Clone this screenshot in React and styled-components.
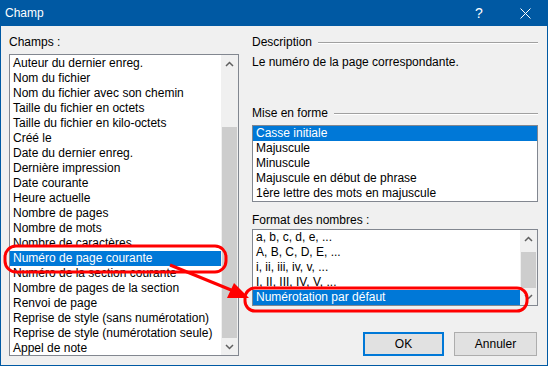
import React from "react";
import styled, { createGlobalStyle } from "styled-components";

const GlobalStyle = createGlobalStyle`
  html, body {
    margin: 0;
    padding: 0;
    background: #f0f0f0;
  }
  body {
    font-family: "Liberation Sans", Arial, sans-serif;
    font-size: 12px;
    color: #000;
  }
`;

const Window = styled.div`
  position: relative;
  width: 548px;
  height: 366px;
  display: flex;
  flex-direction: column;
  background: #f0f0f0;
`;

const TitleBar = styled.div`
  height: 26px;
  flex: none;
  display: flex;
  align-items: center;
  background: #0059a3;
  color: #fff;
`;

const Title = styled.div`
  flex: 1;
  padding-left: 5px;
  font-size: 12px;
`;

const CaptionButton = styled.div`
  width: 46px;
  height: 26px;
  display: flex;
  align-items: center;
  justify-content: center;
  font-size: 14px;
`;

const Body = styled.div`
  flex: 1;
  display: flex;
  gap: 13px;
  padding: 9px 8px 0 8px;
  border: 1px solid #0059a3;
  border-top: none;
`;

const LeftColumn = styled.div`
  width: 230px;
  display: flex;
  flex-direction: column;
`;

const RightColumn = styled.div`
  width: 287px;
  display: flex;
  flex-direction: column;
`;

const Label = styled.div`
  height: 15px;
  line-height: 15px;
  margin-top: ${(p) => p.$mt || 0}px;
  margin-bottom: ${(p) => p.$mb || 0}px;
  white-space: nowrap;
`;

const GroupHeader = styled.div`
  display: flex;
  align-items: center;
  gap: 6px;
  height: 15px;
  line-height: 15px;
  margin-top: ${(p) => p.$mt || 0}px;
  margin-right: 1px;

  &::after {
    content: "";
    flex: 1;
    border-top: 1px solid #a0a0a0;
    border-bottom: 1px solid #fff;
  }
`;

const ListBox = styled.div`
  display: flex;
  height: ${(p) => p.$h}px;
  margin-top: ${(p) => p.$mt || 0}px;
  margin-right: ${(p) => p.$mr || 0}px;
  box-sizing: border-box;
  border: 1px solid #828790;
  background: #fff;
`;

const Items = styled.div`
  flex: 1;
  overflow: hidden;
  padding-top: ${(p) => p.$pt || 0}px;
`;

const Item = styled.div`
  height: 15px;
  line-height: 15px;
  padding-left: 3px;
  white-space: nowrap;
  background: ${(p) => (p.$selected ? "#0078d7" : "transparent")};
  color: ${(p) => (p.$selected ? "#fff" : "#000")};
`;

const ScrollBar = styled.div`
  width: 17px;
  flex: none;
  display: flex;
  flex-direction: column;
  background: #f0f0f0;
`;

const ArrowButton = styled.div`
  height: 17px;
  flex: none;
  display: flex;
  align-items: center;
  justify-content: center;
`;

const Track = styled.div`
  flex: 1;
  display: flex;
  flex-direction: column;
  padding-top: ${(p) => p.$offset}px;
`;

const Thumb = styled.div`
  flex: 1;
  margin: 0 1px;
  background: #cdcdcd;
`;

const Description = styled.div`
  height: 15px;
  line-height: 15px;
  margin-top: 5px;
`;

const ButtonRow = styled.div`
  display: flex;
  justify-content: flex-end;
  gap: 10px;
  margin-top: 26px;
  padding-right: 2px;
`;

const Button = styled.div`
  width: ${(p) => p.$w}px;
  height: 24px;
  box-sizing: border-box;
  display: flex;
  align-items: center;
  justify-content: center;
  background: #e1e1e1;
  border: ${(p) => (p.$default ? "2px solid #0078d7" : "1px solid #adadad")};
`;

const Overlay = styled.svg`
  position: absolute;
  left: 0;
  top: 0;
  pointer-events: none;
`;

const Chevron = ({ up }) => (
  <svg width="9" height="6" viewBox="0 0 9 6">
    <polyline
      points={up ? "1,5 4.5,1.5 8,5" : "1,1 4.5,4.5 8,1"}
      fill="none"
      stroke="#606060"
      strokeWidth="1.5"
    />
  </svg>
);

const Scroll = ({ offset }) => (
  <ScrollBar>
    <ArrowButton>
      <Chevron up />
    </ArrowButton>
    <Track $offset={offset}>
      <Thumb />
    </Track>
    <ArrowButton>
      <Chevron />
    </ArrowButton>
  </ScrollBar>
);

const champs = [
  "Auteur du dernier enreg.",
  "Nom du fichier",
  "Nom du fichier avec son chemin",
  "Taille du fichier en octets",
  "Taille du fichier en kilo-octets",
  "Créé le",
  "Date du dernier enreg.",
  "Dernière impression",
  "Date courante",
  "Heure actuelle",
  "Nombre de pages",
  "Nombre de mots",
  "Nombre de caractères",
  "Numéro de page courante",
  "Numéro de la section courante",
  "Nombre de pages de la section",
  "Renvoi de page",
  "Reprise de style (sans numérotation)",
  "Reprise de style (numérotation seule)",
  "Appel de note",
];

const formes = [
  "Casse initiale",
  "Majuscule",
  "Minuscule",
  "Majuscule en début de phrase",
  "1ère lettre des mots en majuscule",
];

const formats = [
  "a, b, c, d, e, ...",
  "A, B, C, D, E, ...",
  "i, ii, iii, iv, v, ...",
  "I, II, III, IV, V, ...",
  "Numérotation par défaut",
];

export default function App() {
  return (
    <>
      <GlobalStyle />
      <Window>
        <TitleBar>
          <Title>Champ</Title>
          <CaptionButton>?</CaptionButton>
          <CaptionButton>
            <svg width="11" height="11" viewBox="0 0 11 11">
              <path d="M0.5 0.5 L10.5 10.5 M10.5 0.5 L0.5 10.5" stroke="#fff" strokeWidth="1" />
            </svg>
          </CaptionButton>
        </TitleBar>
        <Body>
          <LeftColumn>
            <Label $mb={4}>Champs :</Label>
            <ListBox $h={302}>
              <Items $pt={1}>
                {champs.map((c) => (
                  <Item key={c} $selected={c === "Numéro de page courante"}>
                    {c}
                  </Item>
                ))}
              </Items>
              <Scroll offset={55} />
            </ListBox>
          </LeftColumn>
          <RightColumn>
            <GroupHeader>Description</GroupHeader>
            <Description>Le numéro de la page correspondante.</Description>
            <GroupHeader $mt={36}>Mise en forme</GroupHeader>
            <ListBox $h={77} $mt={4} $mr={1}>
              <Items>
                {formes.map((f, i) => (
                  <Item key={f} $selected={i === 0}>
                    {f}
                  </Item>
                ))}
              </Items>
            </ListBox>
            <Label $mt={11}>Format des nombres :</Label>
            <ListBox $h={77} $mt={1} $mr={1}>
              <Items>
                {formats.map((f, i) => (
                  <Item key={f} $selected={i === 4}>
                    {f}
                  </Item>
                ))}
              </Items>
              <Scroll offset={5} />
            </ListBox>
            <ButtonRow>
              <Button $w={81} $default>
                OK
              </Button>
              <Button $w={83}>Annuler</Button>
            </ButtonRow>
          </RightColumn>
        </Body>
        <Overlay width="548" height="366">
          <rect x="5" y="246" width="221" height="26" rx="11" fill="none" stroke="#f00" strokeWidth="3" />
          <rect x="245" y="288" width="282" height="23" rx="10" fill="none" stroke="#f00" strokeWidth="3" />
          <line x1="170" y1="265" x2="236" y2="292" stroke="#f00" strokeWidth="3" />
          <polygon points="249,298 227,298 234,283" fill="#f00" />
        </Overlay>
      </Window>
    </>
  );
}
